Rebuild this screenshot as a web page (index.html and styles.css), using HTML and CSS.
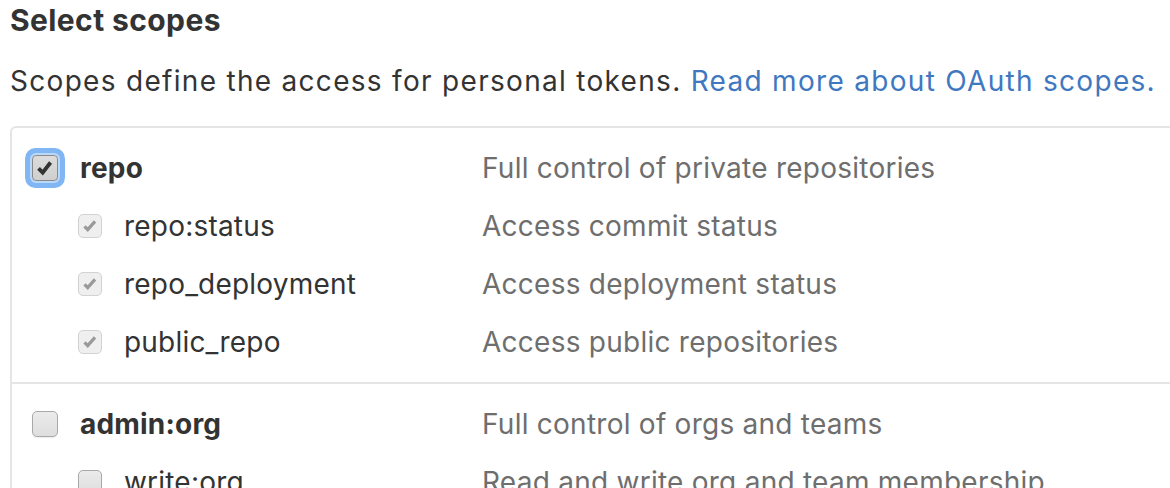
FILE: index.html
```html
<!DOCTYPE html>
<html>
<head>
<meta charset="utf-8">
<link rel="stylesheet" href="styles.css">
</head>
<body>
<h2 class="title">Select scopes</h2>
<p class="lead">Scopes define the access for personal tokens. <a class="link" href="#">Read more about OAuth scopes.</a></p>
<div class="scopes">
  <div class="group">
    <div class="row">
      <div class="name top"><span class="cb cb-focus"><svg viewBox="0 0 26 26" class="check"><polyline points="6,13.5 10.5,18 19,7" fill="none" stroke="#333" stroke-width="4.2" stroke-linejoin="miter" stroke-linecap="butt"/></svg></span><b>repo</b></div>
      <div class="desc">Full control of private repositories</div>
    </div>
    <div class="row">
      <div class="name sub"><span class="cb cb-dis"><svg viewBox="0 0 24 24" class="check"><polyline points="6,12.5 9.5,16 17.5,7" fill="none" stroke="#9a9a9a" stroke-width="3.5"/></svg></span>repo:status</div>
      <div class="desc">Access commit status</div>
    </div>
    <div class="row">
      <div class="name sub"><span class="cb cb-dis"><svg viewBox="0 0 24 24" class="check"><polyline points="6,12.5 9.5,16 17.5,7" fill="none" stroke="#9a9a9a" stroke-width="3.5"/></svg></span>repo_deployment</div>
      <div class="desc">Access deployment status</div>
    </div>
    <div class="row">
      <div class="name sub"><span class="cb cb-dis"><svg viewBox="0 0 24 24" class="check"><polyline points="6,12.5 9.5,16 17.5,7" fill="none" stroke="#9a9a9a" stroke-width="3.5"/></svg></span>public_repo</div>
      <div class="desc">Access public repositories</div>
    </div>
  </div>
  <div class="group">
    <div class="row">
      <div class="name top"><span class="cb cb-off"></span><b>admin:org</b></div>
      <div class="desc">Full control of orgs and teams</div>
    </div>
    <div class="row">
      <div class="name sub"><span class="cb cb-off cb-sm"></span>write:org</div>
      <div class="desc">Read and write org and team membership</div>
    </div>
  </div>
</div>
</body>
</html>
```
FILE: styles.css
```css
html, body {
  margin: 0;
  padding: 0;
  background: #fff;
}
body {
  padding-left: 10px;
  font-family: Inter, "Liberation Sans", sans-serif;
  color: #333;
  overflow: hidden;
  width: 1300px;
  height: 488px;
}
.title {
  margin: 0;
  font-size: 30px;
  line-height: 40px;
  font-weight: 700;
  letter-spacing: 0.4px;
}
.lead {
  margin: 21px 0 25px;
  font-size: 28px;
  line-height: 40px;
  white-space: nowrap;
  letter-spacing: 1.3px;
}
.link {
  color: #4078c0;
  text-decoration: none;
}
.scopes {
  border: 2px solid #e5e5e5;
  border-right: none;
  border-top-left-radius: 6px;
}
.group {
  padding: 11px 0;
}
.group + .group {
  border-top: 2px solid #e5e5e5;
}
.row {
  display: grid;
  grid-template-columns: 450px 1fr;
  padding-left: 20px;
  height: 58px;
  align-items: center;
  font-size: 28px;
  white-space: nowrap;
}
.name {
  display: flex;
  align-items: center;
  gap: 22px;
  letter-spacing: 0.2px;
}
.name b {
  font-weight: 700;
}
.sub {
  padding-left: 46px;
}
.desc {
  color: #6e6e6e;
  letter-spacing: 0.25px;
}
.cb {
  display: inline-flex;
  box-sizing: border-box;
  width: 26px;
  height: 26px;
  border-radius: 5px;
  flex: none;
}
.check {
  width: 100%;
  height: 100%;
}
.cb-focus {
  background: linear-gradient(#dcdcdc, #cfcfcf);
  border: 1.5px solid #8a8a8a;
  box-shadow: 0 0 0 2px #b9d8fb, 0 0 0 7px #80b6f4;
  border-radius: 4px;
}
.cb-dis {
  width: 24px;
  height: 24px;
  background: #efefef;
  border: 1.5px solid #d2d2d2;
}
.cb-off {
  background: linear-gradient(#ebebeb, #dedede);
  border: 1.5px solid #a9a9a9;
  box-shadow: 0 1px 1px rgba(0,0,0,0.08);
}
.cb-sm {
  width: 24px;
  height: 24px;
}
```
